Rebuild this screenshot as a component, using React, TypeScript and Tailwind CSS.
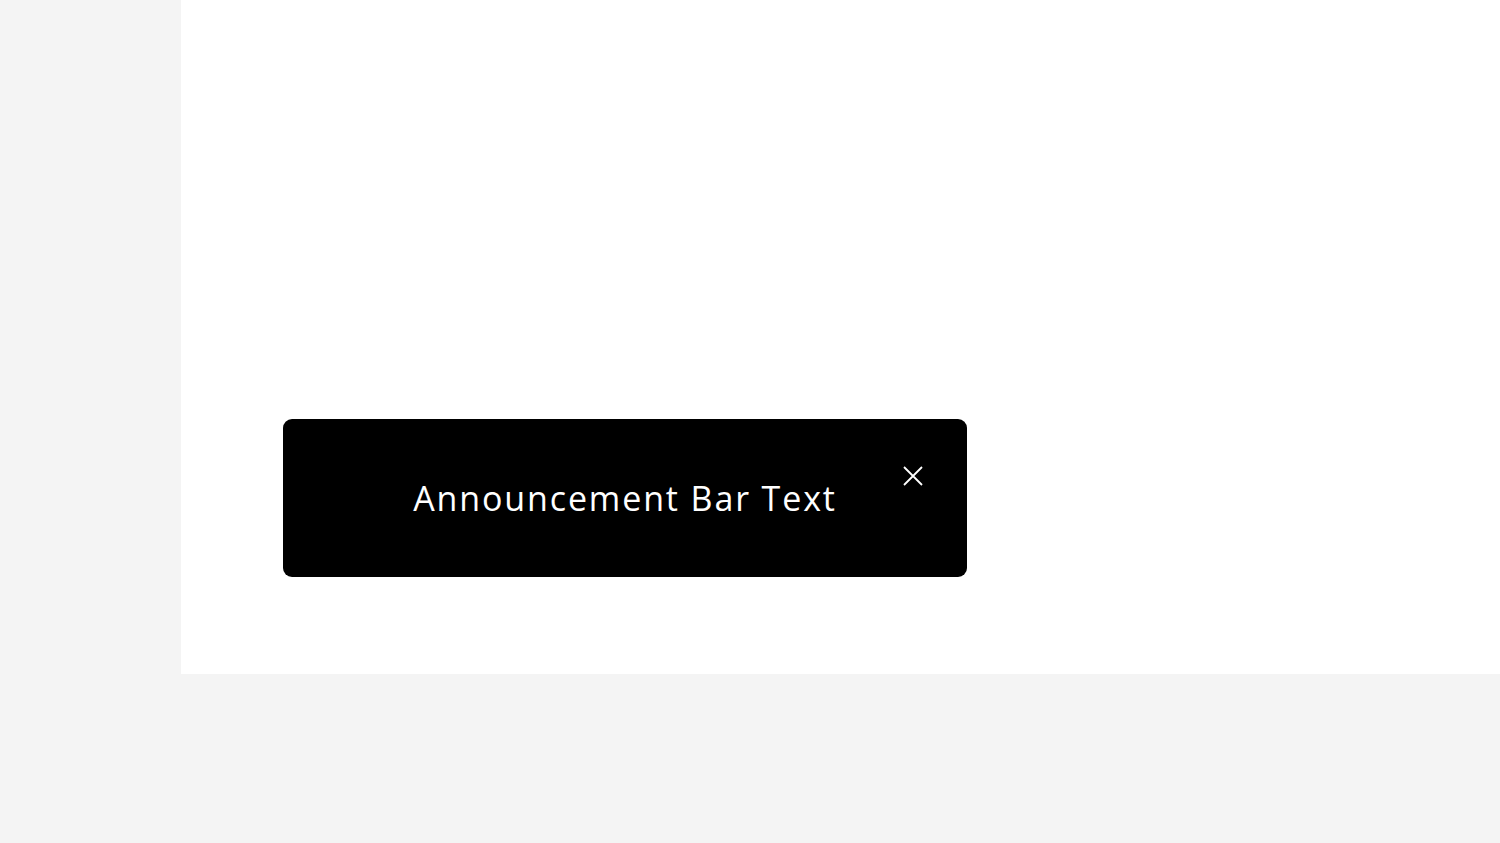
export default function App() {
  return (
    <div className="min-h-[843px] w-full bg-[#f4f4f4]">
      <div className="ml-[181px] h-[674px] bg-white pl-[102px] pt-[419px]">
        <div className="relative flex h-[158px] w-[684px] items-center justify-center rounded-[9px] bg-black">
          <p
            className="text-[34px] leading-none tracking-[0.055em] text-white"
            style={{ fontFamily: '"Open Sans", Arial, sans-serif' }}
          >
            Announcement Bar Text
          </p>
          <button className="absolute right-[44px] top-[46px] flex h-[21px] w-[21px] items-center justify-center text-white">
            <svg viewBox="0 0 20 20" className="h-[20px] w-[20px]" fill="none" stroke="currentColor" strokeWidth="1.8">
              <path d="M1 1L19 19M19 1L1 19" />
            </svg>
          </button>
        </div>
      </div>
    </div>
  );
}
